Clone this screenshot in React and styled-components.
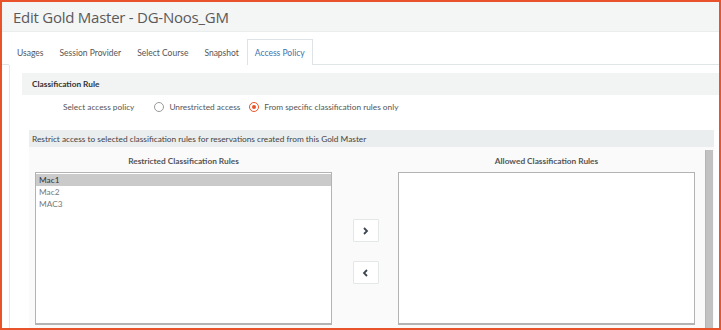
import React from 'react';
import styled, { createGlobalStyle } from 'styled-components';

const GlobalStyle = createGlobalStyle`
  html, body {
    margin: 0;
    padding: 0;
    background: #ffffff;
  }
  body {
    font-family: Lato, 'Open Sans', sans-serif;
    font-size: 8.3px;
    color: #444;
  }
`;

const Frame = styled.div`
  box-sizing: border-box;
  width: 721px;
  height: 330px;
  border: 2px solid #e9532b;
  overflow: hidden;
  display: flex;
  flex-direction: column;
  background: #fff;
`;

const Header = styled.div`
  height: 29px;
  flex: none;
  display: flex;
  align-items: center;
  padding-left: 11px;
  background: #f4f5f5;
  border-bottom: 1px solid #e9eded;
`;

const Title = styled.h1`
  margin: 0;
  font-family: 'Open Sans', sans-serif;
  font-size: 15px;
  font-weight: 400;
  letter-spacing: -0.25px;
  color: #5a5a5a;
`;

const TabBar = styled.div`
  height: 32px;
  flex: none;
  display: flex;
  align-items: flex-end;
  padding-left: 7px;
  border-bottom: 1px solid #dfe4e7;
`;

const Tab = styled.div`
  box-sizing: border-box;
  height: 26px;
  padding: 0 7px;
  display: flex;
  align-items: center;
  font-size: 8.5px;
  color: ${p => (p.$active ? '#3b73ad' : '#555')};
  background: #fff;
  border: 1px solid ${p => (p.$active ? '#dde3e6' : 'transparent')};
  border-bottom: none;
  margin-bottom: -1px;
`;

const Content = styled.div`
  flex: 1;
  min-height: 0;
  margin-left: 7px;
  border-left: 1px solid #e4e8ea;
  padding: 8px 0 0 12px;
  display: flex;
  flex-direction: column;
`;

const SectionHead = styled.div`
  height: 22px;
  flex: none;
  display: flex;
  align-items: center;
  padding-left: 10px;
  background: #f2f4f4;
  font-weight: 700;
  color: #333;
`;

const PolicyRow = styled.div`
  height: 24px;
  flex: none;
  display: flex;
  align-items: center;
  padding-left: 41px;
  color: #555;
`;

const PolicyLabel = styled.span`
  margin-right: 20px;
`;

const RadioOption = styled.label`
  display: flex;
  align-items: center;
  margin-right: 9px;
`;

const RadioDot = styled.span`
  box-sizing: border-box;
  width: 10px;
  height: 10px;
  border-radius: 50%;
  margin-right: 5px;
  border: 1px solid ${p => (p.$on ? '#e9532b' : '#9a9a9a')};
  display: flex;
  align-items: center;
  justify-content: center;
  &::after {
    content: '';
    width: 4px;
    height: 4px;
    border-radius: 50%;
    background: ${p => (p.$on ? '#e9532b' : 'transparent')};
  }
`;

const Panel = styled.div`
  flex: 1;
  min-height: 0;
  margin: 11px 5px 0 7px;
  display: flex;
  flex-direction: column;
`;

const PanelHead = styled.div`
  height: 17px;
  flex: none;
  display: flex;
  align-items: center;
  padding-left: 3px;
  background: #ebeeef;
  color: #444;
`;

const PanelBody = styled.div`
  flex: 1;
  min-height: 0;
  display: flex;
  background: #fafafa;
`;

const Lists = styled.div`
  flex: 1;
  display: flex;
  padding: 9px 10px 0 6px;
`;

const ListColumn = styled.div`
  width: 297px;
  display: flex;
  flex-direction: column;
`;

const ListTitle = styled.div`
  height: 16px;
  text-align: center;
  font-weight: 700;
  color: #555;
`;

const ListBox = styled.div`
  box-sizing: border-box;
  height: 153px;
  background: #fff;
  border: 1px solid #b3b3b3;
  border-bottom-width: 2px;
  padding-top: 1px;
`;

const ListItem = styled.div`
  height: 12px;
  line-height: 12px;
  padding-left: 3px;
  color: ${p => (p.$selected ? '#333' : '#777')};
  background: ${p => (p.$selected ? '#cacaca' : 'transparent')};
`;

const MoveButtons = styled.div`
  width: 66px;
  display: flex;
  flex-direction: column;
  align-items: center;
  padding-top: 63px;
  gap: 19px;
`;

const MoveButton = styled.button`
  box-sizing: border-box;
  width: 26px;
  height: 23px;
  padding: 0;
  margin-left: 1px;
  background: #fff;
  border: 1px solid #e3e7e8;
  border-radius: 1px;
  display: flex;
  align-items: center;
  justify-content: center;
  color: #3d4650;
`;

const ScrollTrack = styled.div`
  width: 7px;
  margin-right: 1px;
  margin-top: 3px;
  background: #c2c2c2;
  border-left: 1px solid #b5b5b5;
`;

const Chevron = ({ dir }) => (
  <svg width="7" height="8" viewBox="0 0 7 8">
    <path
      d={dir === 'right' ? 'M2 1 L5 4 L2 7' : 'M5 1 L2 4 L5 7'}
      fill="none"
      stroke="currentColor"
      strokeWidth="1.8"
    />
  </svg>
);

const tabs = ['Usages', 'Session Provider', 'Select Course', 'Snapshot', 'Access Policy'];
const restricted = ['Mac1', 'Mac2', 'MAC3'];

export default function App() {
  return (
    <>
      <GlobalStyle />
      <Frame>
        <Header>
          <Title>Edit Gold Master - DG-Noos_GM</Title>
        </Header>
        <TabBar>
          {tabs.map(t => (
            <Tab key={t} $active={t === 'Access Policy'}>{t}</Tab>
          ))}
        </TabBar>
        <Content>
          <SectionHead>Classification Rule</SectionHead>
          <PolicyRow>
            <PolicyLabel>Select access policy</PolicyLabel>
            <RadioOption>
              <RadioDot />
              Unrestricted access
            </RadioOption>
            <RadioOption>
              <RadioDot $on />
              From specific classification rules only
            </RadioOption>
          </PolicyRow>
          <Panel>
            <PanelHead>
              Restrict access to selected classification rules for reservations created from this Gold Master
            </PanelHead>
            <PanelBody>
              <Lists>
                <ListColumn>
                  <ListTitle>Restricted Classification Rules</ListTitle>
                  <ListBox>
                    {restricted.map((r, i) => (
                      <ListItem key={r} $selected={i === 0}>{r}</ListItem>
                    ))}
                  </ListBox>
                </ListColumn>
                <MoveButtons>
                  <MoveButton><Chevron dir="right" /></MoveButton>
                  <MoveButton><Chevron dir="left" /></MoveButton>
                </MoveButtons>
                <ListColumn>
                  <ListTitle>Allowed Classification Rules</ListTitle>
                  <ListBox />
                </ListColumn>
              </Lists>
              <ScrollTrack />
            </PanelBody>
          </Panel>
        </Content>
      </Frame>
    </>
  );
}
